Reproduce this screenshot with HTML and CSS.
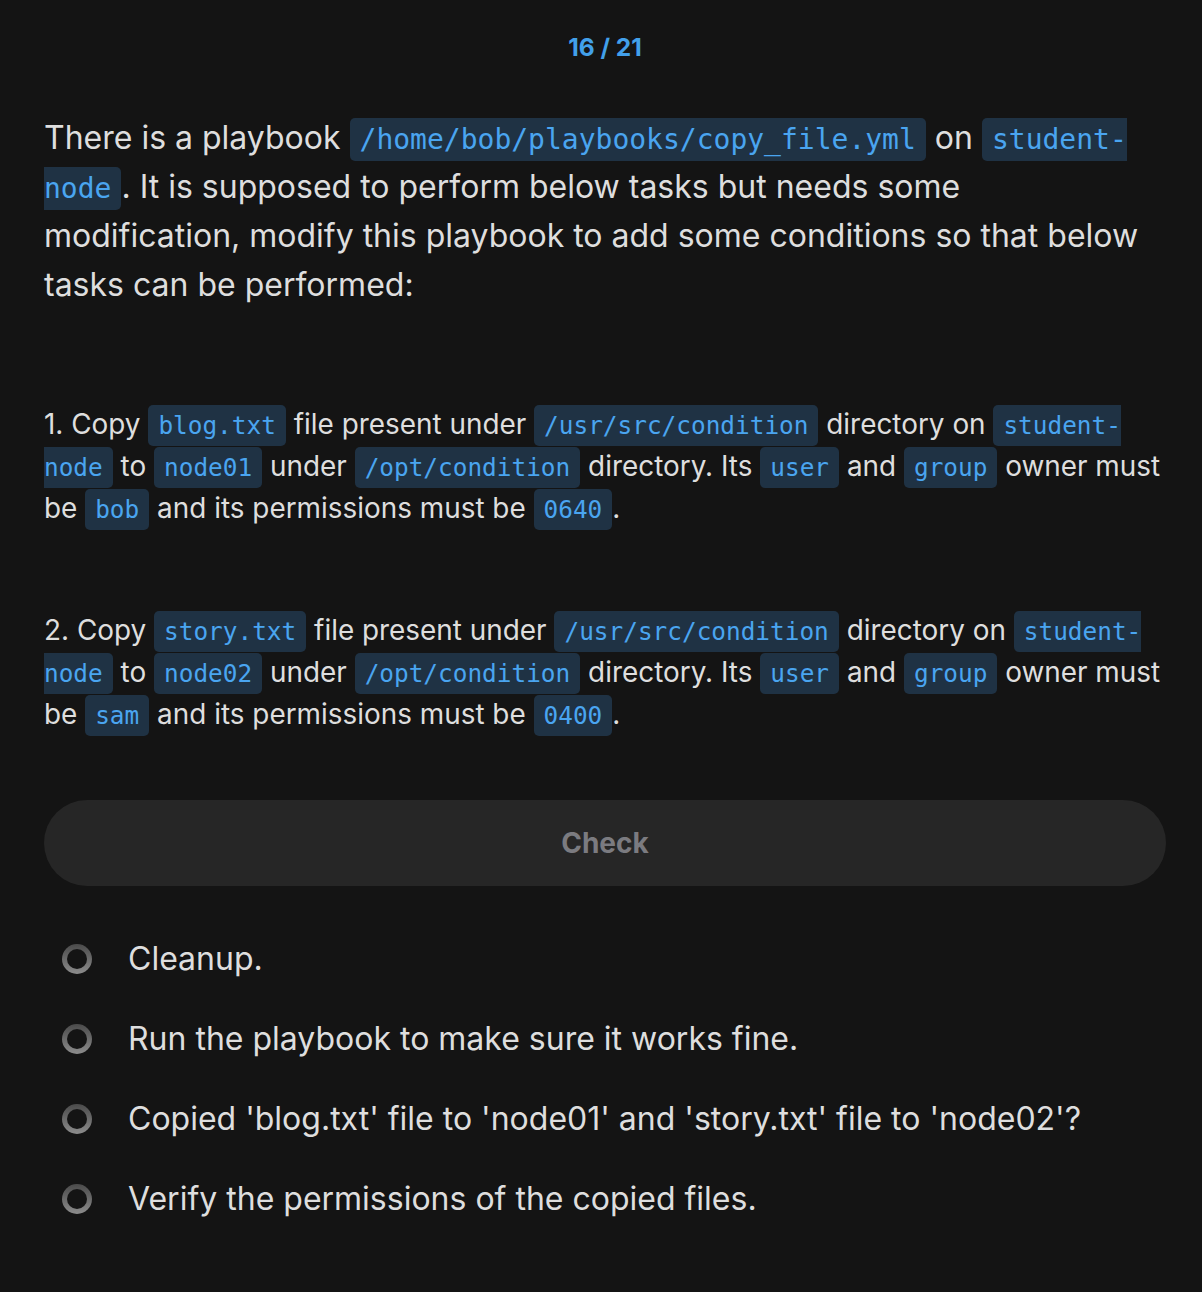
FILE: index.html
```html
<!DOCTYPE html>
<html>
<head>
<meta charset="utf-8">
<link rel="stylesheet" href="styles.css">
</head>
<body>
<div class="page">
  <div class="counter">16 / 21</div>
  <p class="intro">There is a playbook <code>/home/bob/playbooks/copy_file.yml</code> on <code>student-node</code>. It is supposed to perform below tasks but needs some modification, modify this playbook to add some conditions so that below tasks can be performed:</p>
  <p class="task">1. Copy <code>blog.txt</code> file present under <code>/usr/src/condition</code> directory on <code>student-node</code> to <code>node01</code> under <code>/opt/condition</code> directory. Its <code>user</code> and <code>group</code> owner must be <code>bob</code> and its permissions must be <code>0640</code>.</p>
  <p class="task">2. Copy <code>story.txt</code> file present under <code>/usr/src/condition</code> directory on <code>student-node</code> to <code>node02</code> under <code>/opt/condition</code> directory. Its <code>user</code> and <code>group</code> owner must be <code>sam</code> and its permissions must be <code>0400</code>.</p>
  <button class="check">Check</button>
  <ul class="checks">
    <li><span class="radio"></span><span>Cleanup.</span></li>
    <li><span class="radio"></span><span>Run the playbook to make sure it works fine.</span></li>
    <li><span class="radio"></span><span>Copied 'blog.txt' file to 'node01' and 'story.txt' file to 'node02'?</span></li>
    <li><span class="radio"></span><span>Verify the permissions of the copied files.</span></li>
  </ul>
</div>
</body>
</html>
```
FILE: styles.css
```css
html, body {
  margin: 0;
  padding: 0;
  background: #141414;
}
body {
  font-family: Inter, "Noto Sans", sans-serif;
  color: #dedede;
}
.page {
  padding: 29px 36px 40px 44px;
}
.counter {
  text-align: center;
  color: #42a0ea;
  font-weight: 700;
  font-size: 24.5px;
  line-height: 36px;
}
.intro {
  font-size: 32px;
  line-height: 49px;
  margin: 48px 0 0 0;
  padding-right: 12px;
}
.task {
  font-size: 27.9px;
  line-height: 42px;
  margin: 0;
}
.intro + .task {
  margin-top: 94px;
}
.task + .task {
  margin-top: 80px;
}
code {
  font-family: "DejaVu Sans Mono", "Liberation Mono", monospace;
  color: #4aa5f0;
  background: #1f3244;
  border-radius: 5px;
  padding: 4px 10px;
  line-height: 1;
}
.intro code { font-size: 28px; padding: 5px 10px; }
.task code { font-size: 24.4px; padding: 6px 10px; }
.check {
  display: block;
  width: 100%;
  height: 86px;
  margin-top: 65px;
  border: none;
  border-radius: 43px;
  background: #262626;
  color: #7b7b80;
  font-family: Inter, "Noto Sans", sans-serif;
  font-weight: 700;
  font-size: 28px;
}
.checks {
  list-style: none;
  margin: 53px 0 0 0;
  padding: 0 0 0 18px;
  display: flex;
  flex-direction: column;
  gap: 40px;
}
.checks li {
  display: flex;
  align-items: center;
  gap: 36px;
  font-size: 32px;
  line-height: 40px;
}
.radio {
  position: relative;
  width: 30px;
  height: 30px;
  border-radius: 50%;
  background: linear-gradient(180deg, #4a4a4a 0%, #8c8c8c 100%);
  flex: none;
}
.radio::after {
  content: "";
  position: absolute;
  inset: 5px;
  border-radius: 50%;
  background: #141414;
}
```
